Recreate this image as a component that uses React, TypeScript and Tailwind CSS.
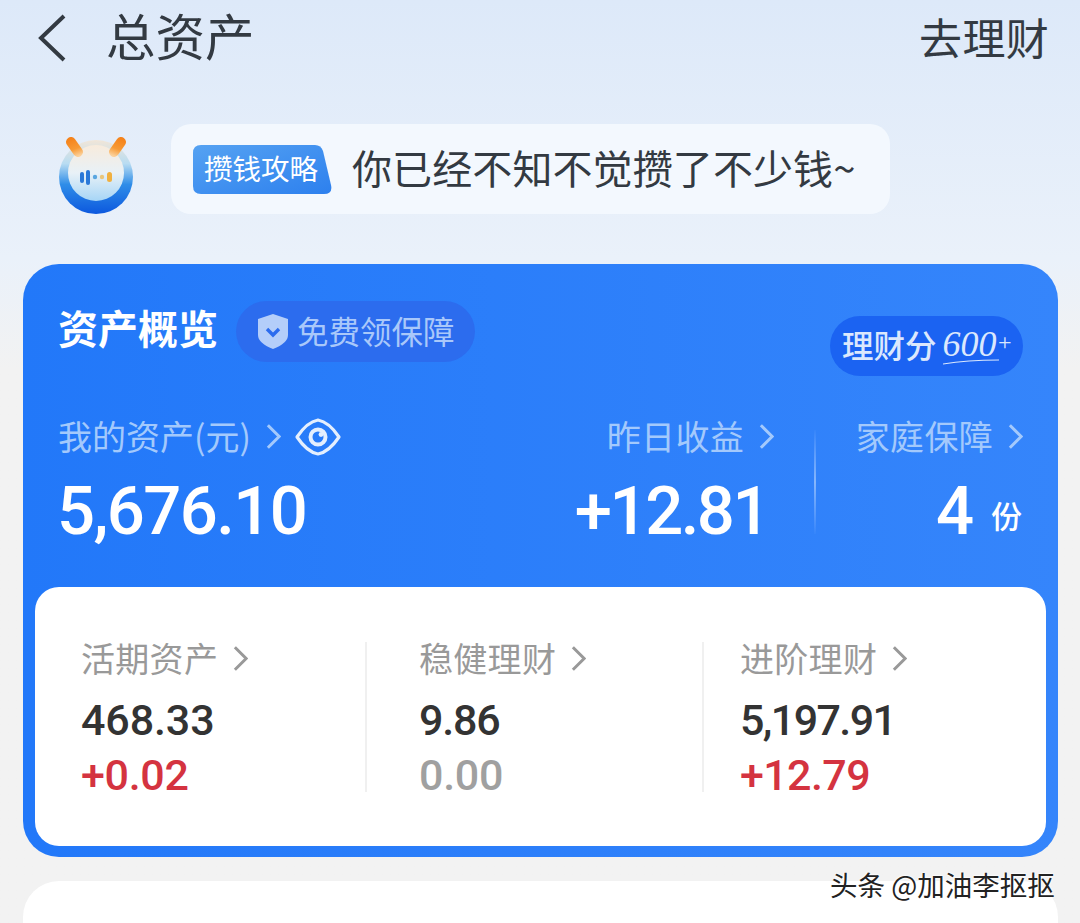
import React from 'react';

const cjk = "font-['Noto_Sans_CJK_SC','Noto_Sans',sans-serif]";
const num = "font-['Roboto','Liberation_Sans',sans-serif]";

const Chevron = ({ className }: { className: string }) => (
    <svg viewBox="0 0 16 28" className={className} fill="none" stroke="currentColor" strokeWidth="3.2">
        <path d="M2 2 L14 14 L2 26" />
    </svg>
);

const Mascot = () => (
    <svg viewBox="0 0 76 80" className="w-[76px] h-[80px] shrink-0 blur-[0.5px]">
        <defs>
            <linearGradient id="ring" x1="0" y1="0" x2="0" y2="1">
                <stop offset="0" stopColor="#f2e6d8" />
                <stop offset="0.32" stopColor="#b8dcf2" />
                <stop offset="0.6" stopColor="#2f8de8" />
                <stop offset="1" stopColor="#0c58de" />
            </linearGradient>
            <linearGradient id="face" x1="0" y1="0" x2="0" y2="1">
                <stop offset="0" stopColor="#f8ebdc" />
                <stop offset="0.5" stopColor="#e8f1f7" />
                <stop offset="1" stopColor="#a6d5f6" />
            </linearGradient>
            <linearGradient id="earLeft" gradientUnits="userSpaceOnUse" x1="13" y1="2" x2="20" y2="20">
                <stop offset="0" stopColor="#f5821a" />
                <stop offset="0.6" stopColor="#f79a35" />
                <stop offset="1" stopColor="#fbd09a" />
            </linearGradient>
            <linearGradient id="earRight" gradientUnits="userSpaceOnUse" x1="63" y1="2" x2="56" y2="20">
                <stop offset="0" stopColor="#f5821a" />
                <stop offset="0.6" stopColor="#f79a35" />
                <stop offset="1" stopColor="#fbd09a" />
            </linearGradient>
        </defs>
        <circle cx="38" cy="41" r="37" fill="url(#ring)" />
        <circle cx="38" cy="37" r="28" fill="url(#face)" />
        <path d="M13 6 L20 16" stroke="url(#earLeft)" strokeWidth="10" strokeLinecap="round" />
        <path d="M63 6 L56 16" stroke="url(#earRight)" strokeWidth="10" strokeLinecap="round" />
        <rect x="22" y="36" width="4" height="11" rx="2" fill="#2a78d8" />
        <rect x="28" y="34" width="4" height="15" rx="2" fill="#2a78d8" />
        <circle cx="37" cy="41" r="2.2" fill="#5aa6e0" />
        <circle cx="44" cy="41" r="2.2" fill="#e9c67c" />
        <rect x="49" y="36" width="5" height="10" rx="2.5" fill="#f0b040" />
    </svg>
);

const Stat = ({ label, value, valueTrack, delta, deltaTrack, deltaClass, width, pad }: { label: string; value: string; valueTrack: string; delta: string; deltaTrack: string; deltaClass: string; width: string; pad: string }) => (
    <div className={`${width} ${pad} shrink-0`}>
        <div className="flex items-center h-[44px] text-[#999999]">
            <span className="text-[34px] leading-[44px] tracking-[0.3px] whitespace-nowrap">{label}</span>
            <Chevron className="w-[15px] h-[27px] ml-[15px]" />
        </div>
        <div className={`${num} ${valueTrack} font-medium text-[#333333] text-[43px] leading-[54px] mt-[13px]`}>{value}</div>
        <div className={`${num} ${deltaTrack} font-medium ${deltaClass} text-[43px] leading-[54px] mt-[1px]`}>{delta}</div>
    </div>
);

export default function App() {
    return (
        <div className={`${cjk} relative w-[1080px] h-[923px] overflow-hidden bg-gradient-to-b from-[#dde9f9] via-[#eaf1fa] via-[28%] to-[#f2f2f2] to-[40%]`}>
            <div className="flex items-center h-[75px] pl-[38px] pr-[31px] text-[#333a42]">
                <svg viewBox="0 0 28 48" className="w-[28px] h-[48px] shrink-0" fill="none" stroke="currentColor" strokeWidth="4">
                    <path d="M26 2 L3 24 L26 46" />
                </svg>
                <span className="ml-[40px] mb-[6px] text-[49.5px] leading-[60px] flex-1">总资产</span>
                <span className="mb-[4px] text-[43px] tracking-[0.3px] leading-[60px]">去理财</span>
            </div>

            <div className="flex mt-[49px] pl-[58px] h-[90px]">
                <div className="mt-[12px] w-[113px] shrink-0">
                    <Mascot />
                </div>
                <div className="flex items-center w-[719px] h-[90px] rounded-[20px] bg-[#f3f8fe] pl-[22px]">
                    <div className="relative w-[139px] h-[49px] shrink-0 flex items-center pl-[11px]">
                        <svg viewBox="0 0 139 49" className="absolute inset-0 w-[139px] h-[49px]">
                            <defs>
                                <linearGradient id="tag" x1="0" y1="0" x2="1" y2="1">
                                    <stop offset="0" stopColor="#55a2f2" />
                                    <stop offset="1" stopColor="#2d80ee" />
                                </linearGradient>
                            </defs>
                            <path d="M8 0 H122 Q128 0 130 6 L138 40 Q140 49 131 49 H8 Q0 49 0 41 V8 Q0 0 8 0 Z" fill="url(#tag)" />
                        </svg>
                        <span className="relative mb-[2px] text-white text-[28.5px] leading-[36px] whitespace-nowrap">攒钱攻略</span>
                    </div>
                    <span className="ml-[20px] mb-[4px] text-[#333a42] text-[40px] leading-[50px] tracking-[0.1px] whitespace-nowrap">你已经不知不觉攒了不少钱~</span>
                </div>
            </div>

            <div className="mt-[50px] mx-[23px] w-[1035px] h-[593px] rounded-[36px] bg-gradient-to-r from-[#2278f9] to-[#3585fb] pt-[37px] flex flex-col">
                <div className="flex items-start pl-[36px] pr-[35px]">
                    <span className="-mt-[4px] -ml-[1px] w-[160px] text-white font-bold text-[40px] leading-[61px] whitespace-nowrap">资产概览</span>
                    <div className="ml-[18px] h-[61px] w-[239px] rounded-full bg-[#2c6cee] flex items-center pl-[22px]">
                        <svg viewBox="0 0 30 35" className="w-[30px] h-[35px] shrink-0">
                            <path d="M15 0 L30 5 V21 Q30 29 15 35 Q0 29 0 21 V5 Z" fill="#b4cefa" />
                            <path d="M9 15 L15 21 L21 15" fill="none" stroke="#2c6cee" strokeWidth="3.4" />
                        </svg>
                        <span className="ml-[9px] mb-[4px] text-[#a9c8fa] text-[31.5px] leading-[40px] whitespace-nowrap">免费领保障</span>
                    </div>
                    <div className="ml-auto mt-[15px] h-[60px] w-[193px] rounded-full bg-[#1b63f2] flex items-center pl-[12px] text-[#dbe8fd]">
                        <span className="mb-[4px] text-[31.5px] font-medium leading-[40px] whitespace-nowrap">理财分</span>
                        <span className="relative ml-[6px] mb-[6px] font-['Liberation_Serif',serif] italic text-[36px] leading-[36px] whitespace-nowrap">
                            600<span className="text-[24px] align-[6px]">+</span>
                            <svg viewBox="0 0 56 6" className="absolute left-0 top-[35px] w-[56px] h-[6px]" fill="none" stroke="#dbe8fd" strokeWidth="1.2">
                                <path d="M0 5 Q24 1 56 1" />
                            </svg>
                        </span>
                    </div>
                </div>

                <div className="flex mt-[38px] pl-[35px] pr-[36px]">
                    <div className="flex-1">
                        <div className="flex items-center h-[44px] text-[#a3c9fc]">
                            <span className="text-[34px] leading-[44px] whitespace-nowrap">我的资产(元)</span>
                            <Chevron className="w-[15px] h-[27px] ml-[15px]" />
                            <svg viewBox="0 0 46 38" className="w-[46px] h-[38px] ml-[14px] mt-[2px] text-[#e4effe]" fill="none" stroke="currentColor" strokeWidth="3.2">
                                <path d="M2 19 Q12 4 23 2 Q34 4 44 19 Q34 34 23 36 Q12 34 2 19 Z" strokeLinejoin="round" />
                                <circle cx="23" cy="19" r="7.5" strokeWidth="4" />
                                <circle cx="26" cy="16.5" r="2.4" fill="currentColor" stroke="none" />
                            </svg>
                        </div>
                        <div className={`${num} font-medium text-white text-[67px] leading-[76px] mt-[15px] -ml-[1px] tracking-[-1.6px] whitespace-nowrap`}>5,676.10</div>
                    </div>
                    <div className="flex flex-col items-end">
                        <div className="flex items-center h-[44px] mr-[1px] text-[#a3c9fc]">
                            <span className="text-[34px] leading-[44px] tracking-[0.3px] whitespace-nowrap">昨日收益</span>
                            <Chevron className="w-[15px] h-[27px] ml-[15px]" />
                        </div>
                        <div className={`${num} font-medium text-white text-[67px] leading-[76px] mt-[15px] mr-[7px] tracking-[-2.5px] whitespace-nowrap`}>+12.81</div>
                    </div>
                    <div className="w-[2px] h-[104px] mt-[16px] ml-[39px] bg-gradient-to-b from-[#3585fb] via-[#86b6fc] to-[#3585fb]" />
                    <div className="w-[206px] flex flex-col items-end">
                        <div className="flex items-center h-[44px] -mr-[1px] text-[#a3c9fc]">
                            <span className="text-[34px] leading-[44px] tracking-[0.3px] whitespace-nowrap">家庭保障</span>
                            <Chevron className="w-[15px] h-[27px] ml-[15px]" />
                        </div>
                        <div className="flex items-center mt-[15px] text-white">
                            <span className={`${num} font-medium text-[67px] leading-[76px]`}>4</span>
                            <span className="ml-[17px] mt-[8px] text-[31px] font-medium leading-[40px]">份</span>
                        </div>
                    </div>
                </div>

                <div className="mt-auto mb-[11px] mx-[12px] h-[259px] rounded-[24px] bg-white flex pt-[49px] pl-[46px]">
                    <Stat label="活期资产" value="468.33" valueTrack="tracking-[-0.1px]" delta="+0.02" deltaTrack="tracking-[-0.3px]" deltaClass="text-[#d43340]" width="w-[284px]" pad="" />
                    <div className="w-[2px] h-[150px] mt-[6px] bg-[#f0f0f0] shrink-0" />
                    <Stat label="稳健理财" value="9.86" valueTrack="tracking-[-1.2px]" delta="0.00" deltaTrack="tracking-[-0.3px]" deltaClass="text-[#a0a0a0]" width="w-[335px]" pad="pl-[52px]" />
                    <div className="w-[2px] h-[150px] mt-[6px] bg-[#f0f0f0] shrink-0" />
                    <Stat label="进阶理财" value="5,197.91" valueTrack="tracking-[-1.6px]" delta="+12.79" deltaTrack="tracking-[-0.6px]" deltaClass="text-[#d43340]" width="w-[280px]" pad="pl-[36px]" />
                </div>
            </div>

            <div className="mt-[24px] mx-[23px] w-[1035px] h-[100px] rounded-t-[36px] bg-white" />

            <div className="absolute left-[830px] top-[866px] text-[#222222] text-[27.5px] leading-[36px] whitespace-nowrap [text-shadow:0_0_2px_#ffffff,0_0_2px_#ffffff,0_0_3px_#ffffff]">
                头条 @加油李抠抠
            </div>
        </div>
    );
}
